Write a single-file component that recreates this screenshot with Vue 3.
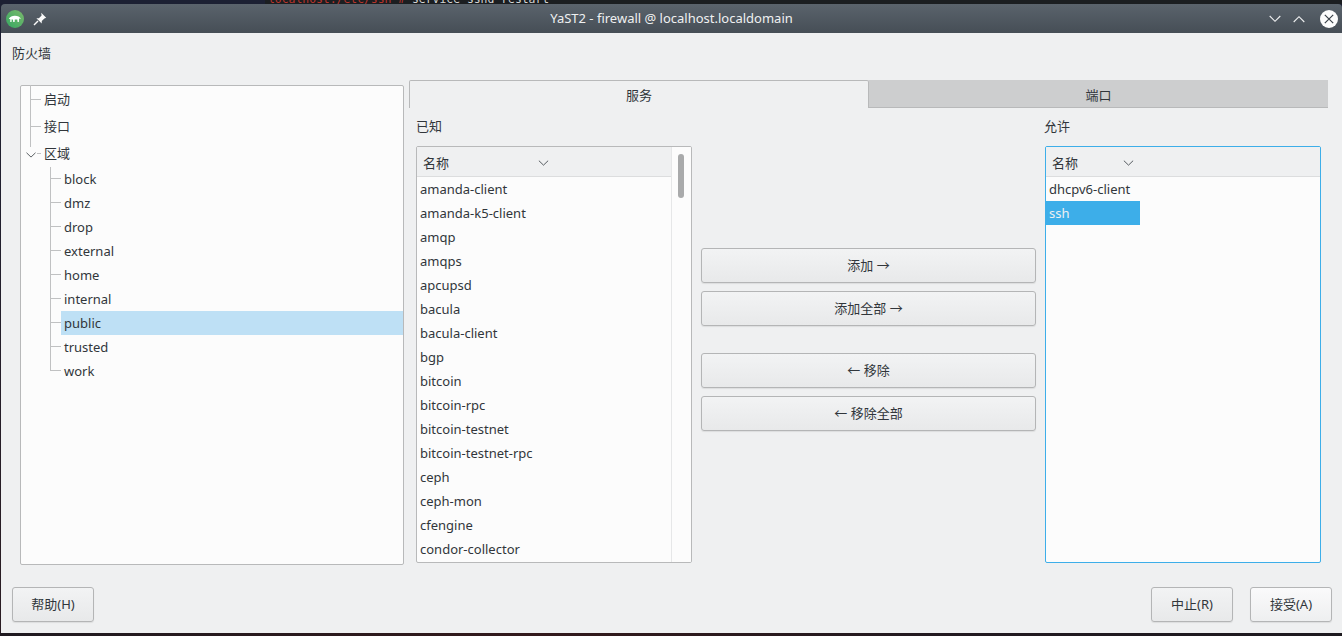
<script setup>
const topItems = ["启动", "接口"];
const zones = ["block", "dmz", "drop", "external", "home", "internal", "public", "trusted", "work"];
const known = [
  "amanda-client", "amanda-k5-client", "amqp", "amqps", "apcupsd", "bacula", "bacula-client", "bgp",
  "bitcoin", "bitcoin-rpc", "bitcoin-testnet", "bitcoin-testnet-rpc", "ceph", "ceph-mon", "cfengine", "condor-collector",
];
</script>

<template>
  <div class="screen">
    <div class="terminal"><div class="terminal-line"><span class="prompt">localhost:/etc/ssh #</span> service sshd restart</div></div>
    <div class="window">
      <header class="titlebar">
        <svg class="app-icon" width="18" height="18" viewBox="0 0 18 18">
          <defs>
            <linearGradient id="appGreen" x1="0" y1="1" x2="1" y2="0">
              <stop offset="0" stop-color="#35a862" />
              <stop offset="1" stop-color="#7cb96c" />
            </linearGradient>
          </defs>
          <circle cx="9" cy="9" r="9" fill="url(#appGreen)" />
          <path d="M2.800 8.800C4 6.600 6.500 5.600 9 5.700c2.700.1 4.800 1.100 6 3l-1.700-.2c-.3.7-.4 1.800-.4 3.500h-1.300l-.3-2.500H8.800l-.2 2.500H7.200L7 9.800l-1.300-.5-.2 2.700H4.300V9.200z" fill="#fff" />
        </svg>
        <svg class="pin-icon" width="14" height="14" viewBox="0 0 14 14">
          <path d="M8.200.8l5 5-1.800.6-2.600 2.700-.1 2.500-5.300-5.300 2.500-.1 2.700-2.600z" fill="#fafafa" />
          <path d="M5 9l-4 4" stroke="#fafafa" stroke-width="1.500" fill="none" />
        </svg>
        <div class="title">YaST2 - firewall @ localhost.localdomain</div>
        <svg class="win-btn" width="12" height="8" viewBox="0 0 12 8">
          <path d="M.7 1l5.300 5.300L11.300 1" stroke="#eff0f1" stroke-width="1.100" fill="none" />
        </svg>
        <svg class="win-btn" width="12" height="8" viewBox="0 0 12 8">
          <path d="M.7 7L6 1.700 11.300 7" stroke="#eff0f1" stroke-width="1.100" fill="none" />
        </svg>
        <svg class="close-btn" width="18" height="18" viewBox="0 0 18 18">
          <circle cx="9" cy="9" r="9" fill="#fcfcfc" />
          <path d="M4.800 4.800l8.400 8.400M13.200 4.800l-8.400 8.400" stroke="#3a4249" stroke-width="1.200" fill="none" />
        </svg>
      </header>

      <main class="content">
        <div class="heading">防火墙</div>

        <div class="body-row">
          <div class="tree">
            <div v-for="item in topItems" :key="item" class="tree-top">{{ item }}</div>
            <div class="tree-top tree-zone">
              <svg class="tree-arrow" width="10" height="6" viewBox="0 0 12 7">
                <path d="M.6.800L6 6 11.400.800" stroke="#4d5257" stroke-width="1.100" fill="none" />
              </svg>
              区域
            </div>
            <div class="zones">
              <div
                v-for="zone in zones"
                :key="zone"
                class="zone-row"
                :class="{ 'zone-row--active': zone === 'public' }"
              >
                <span class="zone-label">{{ zone }}</span>
              </div>
            </div>
          </div>

          <section class="panel">
            <div class="tabs">
              <div class="tab tab--active">服务</div>
              <div class="tab">端口</div>
            </div>

            <div class="lists">
              <div class="list-col">
                <div class="list-label">已知</div>
                <div class="list">
                  <div class="list-main">
                    <div class="list-head">
                      <span>名称</span>
                      <svg width="11" height="6" viewBox="0 0 12 7">
                        <path d="M.6.800L6 6 11.400.800" stroke="#4d5257" stroke-width="1.100" fill="none" />
                      </svg>
                    </div>
                    <div v-for="name in known" :key="name" class="list-row">{{ name }}</div>
                  </div>
                  <div class="scroll"><div class="scroll-thumb"></div></div>
                </div>
              </div>

              <div class="actions">
                <button class="btn">添加 →</button>
                <button class="btn">添加全部 →</button>
                <button class="btn btn--group">← 移除</button>
                <button class="btn">← 移除全部</button>
              </div>

              <div class="list-col">
                <div class="list-label list-label--right">允许</div>
                <div class="list list--focus">
                  <div class="list-main">
                    <div class="list-head list-head--short">
                      <span>名称</span>
                      <svg width="11" height="6" viewBox="0 0 12 7">
                        <path d="M.6.800L6 6 11.400.800" stroke="#4d5257" stroke-width="1.100" fill="none" />
                      </svg>
                    </div>
                    <div class="list-row">dhcpv6-client</div>
                    <div class="list-row list-row--active">ssh</div>
                  </div>
                </div>
              </div>
            </div>
          </section>
        </div>

        <footer class="footer">
          <button class="btn btn--small">帮助(H)</button>
          <div class="footer-right">
            <button class="btn btn--small">中止(R)</button>
            <button class="btn btn--small btn--default">接受(A)</button>
          </div>
        </footer>
      </main>
    </div>
    <div class="desktop-edge"></div>
  </div>
</template>

<style>
html,
body {
  margin: 0;
  background: #1b1c26;
  overflow: hidden;
}
</style>

<style scoped>
.screen {
  width: 1342px;
  height: 636px;
  display: flex;
  flex-direction: column;
  overflow: hidden;
  background: linear-gradient(#1c2033, #2a1c22);
  font-family: "Noto Sans", "Noto Sans CJK SC", sans-serif;
  font-size: 13px;
  color: #31363b;
}

.terminal {
  height: 4px;
  flex: none;
  overflow: hidden;
  padding-left: 268px;
  background: linear-gradient(90deg, #1c2033 0, #1c2033 265px, #1b1e21 265px);
}

.terminal-line {
  margin-top: -1px;
  font-family: "DejaVu Sans Mono", monospace;
  font-size: 11.4px;
  line-height: 0;
  white-space: nowrap;
  color: #d4d4d4;
}

.prompt {
  color: #b8342c;
}

.window {
  flex: 1;
  margin-left: 1px;
  display: flex;
  flex-direction: column;
  min-height: 0;
}

.desktop-edge {
  height: 3px;
  flex: none;
  background: linear-gradient(90deg, #1f1a20, #33191c 40%, #221a20 70%, #1d1a1f);
}

.titlebar {
  height: 29px;
  flex: none;
  display: flex;
  align-items: center;
  padding: 0 4px 0 5px;
  color: #eff0f1;
  background: linear-gradient(#5a636c, #464e56);
  border-radius: 4px 4px 0 0;
}

.pin-icon {
  margin-left: 9px;
}

.title {
  flex: 1;
  text-align: center;
  padding: 0 0 2px 27px;
}

.win-btn {
  margin-right: 12px;
}

.close-btn {
  margin-left: 3px;
}

.content {
  flex: 1;
  min-height: 0;
  display: flex;
  flex-direction: column;
  padding: 0 10px 11px 11px;
  background: #eff0f1;
}

.heading {
  height: 47px;
  flex: none;
  display: flex;
  align-items: center;
  padding-bottom: 8px;
  box-sizing: border-box;
}

.body-row {
  height: 485px;
  flex: none;
  display: flex;
  gap: 5px;
  padding-left: 8px;
}

.tree {
  width: 384px;
  height: 480px;
  margin-top: 5px;
  box-sizing: border-box;
  padding-top: 1px;
  flex: none;
  background: #fcfcfc;
  border: 1px solid #b8b9ba;
  border-radius: 2px;
  position: relative;
}

.tree-top {
  position: relative;
  height: 27px;
  line-height: 25px;
  padding-left: 23px;
}

.tree-top::before {
  content: "";
  position: absolute;
  left: 9px;
  top: 12px;
  width: 11px;
  height: 1px;
  background: #c0c1c2;
}

.tree-top::after {
  content: "";
  position: absolute;
  left: 9px;
  top: -2px;
  width: 1px;
  height: 29px;
  background: #c0c1c2;
}

.tree-zone::before {
  left: 16px;
  width: 4px;
}

.tree-zone::after {
  height: 8px;
}

.tree-arrow {
  position: absolute;
  left: 5px;
  top: 11px;
}

.zones {
  margin-top: -1px;
  padding-left: 40px;
}

.zone-row {
  position: relative;
  height: 24px;
  line-height: 24px;
  padding-left: 3px;
}

.zone-row::before {
  content: "";
  position: absolute;
  left: -10px;
  top: 11px;
  width: 10px;
  height: 1px;
  background: #c0c1c2;
}

.zone-row::after {
  content: "";
  position: absolute;
  left: -11px;
  top: 0;
  width: 1px;
  height: 24px;
  background: #c0c1c2;
}

.zone-row:last-child::after {
  height: 12px;
}

.zone-row--active {
  background: #bee0f5;
}

.panel {
  flex: 1;
  min-width: 0;
  display: flex;
  flex-direction: column;
}

.tabs {
  display: flex;
  height: 28px;
  flex: none;
  margin-right: 4px;
}

.tab {
  flex: 1;
  text-align: center;
  line-height: 29px;
  padding-top: 1px;
  background: #cdcecf;
  border-bottom: 1px solid #b8b9ba;
  box-sizing: border-box;
}

.tab--active {
  flex: none;
  width: 460px;
  padding-top: 0;
  background: #eff0f1;
  border: 1px solid #b8b9ba;
  border-bottom: none;
  border-radius: 2px 2px 0 0;
}

.lists {
  display: grid;
  grid-template-columns: 276px 335px 276px;
  gap: 9px;
  padding-left: 7px;
}

.list-col {
  display: flex;
  flex-direction: column;
}

.list-label {
  height: 38px;
  line-height: 36px;
  box-sizing: border-box;
}

.list-label--right {
  margin-left: -1px;
}

.list {
  height: 417px;
  box-sizing: border-box;
  display: flex;
  overflow: hidden;
  background: #fcfcfc;
  border: 1px solid #b8b9ba;
  border-radius: 2px;
}

.list--focus {
  border-color: #3daee9;
}

.list-main {
  flex: 1;
  min-width: 0;
}

.list-head {
  height: 30px;
  box-sizing: border-box;
  display: flex;
  align-items: center;
  justify-content: space-between;
  padding: 2px 122px 0 6px;
  background: #eff0f1;
  border-bottom: 1px solid #dcddde;
}

.list-head--short {
  padding-right: 186px;
}

.list-row {
  height: 24px;
  line-height: 24px;
  padding-left: 3px;
}

.list-row--active {
  width: 94px;
  box-sizing: border-box;
  color: #eff0f1;
  background: #3daee9;
}

.scroll {
  width: 20px;
  flex: none;
  box-sizing: border-box;
  padding: 7px 0 0 6px;
  border-left: 1px solid #e6e7e8;
  background: #fcfcfc;
}

.scroll-thumb {
  width: 6px;
  height: 44px;
  border-radius: 3px;
  background: #a9aaab;
}

.actions {
  display: flex;
  flex-direction: column;
  gap: 8px;
  padding-top: 140px;
}

.btn {
  height: 35px;
  box-sizing: border-box;
  padding: 0 0 2px;
  font: inherit;
  color: #31363b;
  background: linear-gradient(#f2f3f4, #e8e9ea);
  border: 1px solid #b4b5b6;
  border-radius: 3px;
  box-shadow: 0 1px 1px rgba(0, 0, 0, 0.08);
}

.btn--group {
  margin-top: 19px;
}

.btn--small {
  width: 82px;
}

.btn--default {
  background: linear-gradient(#fafafb, #eeeff0);
}

.footer {
  flex: none;
  display: flex;
  justify-content: space-between;
  margin-top: 22px;
}

.footer-right {
  display: flex;
  gap: 17px;
}
</style>
